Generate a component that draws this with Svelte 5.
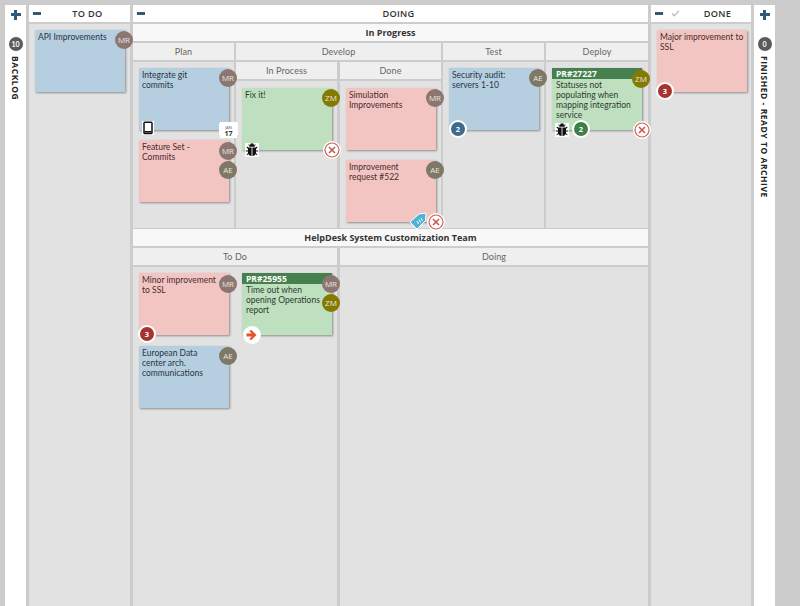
<script>
  const bug = 'M5 2.2a2 2 0 0 1 4 0l1.2-1 .5.6-1.2 1.2.4.7H4.1l.4-.7L3.3 1.8l.5-.6zM3.4 4.5h3.2V13c-1.6 0-2.8-.8-3.2-2l-1.5 1.3-.5-.6L3 10V8.4H.8v-.9H3V6L1.4 4.2l.5-.6zM7.4 4.5h3.2l1.5-.9.5.6L11 6v1.5h2.2v.9H11V10l1.6 1.7-.5.6-1.5-1.3c-.4 1.2-1.6 2-3.2 2z';
</script>

{#snippet av(label, cls, top)}
  <span class="av {cls}" style="top:{top}px">{label}</span>
{/snippet}

{#snippet cross(cls)}
  <span class="x {cls}">
    <svg viewBox="0 0 18 18" width="18" height="18"><circle cx="9" cy="9" r="9" fill="#fff"/><circle cx="9" cy="9" r="7" fill="none" stroke="#d0625a" stroke-width="1.2"/><path d="M6 6l6 6M12 6l-6 6" stroke="#c8574f" stroke-width="1.6" fill="none"/></svg>
  </span>
{/snippet}

{#snippet bugIcon(cls)}
  <span class="bug {cls}"><svg viewBox="0 0 14 14" width="14" height="14"><path d={bug} fill="#111"/></svg></span>
{/snippet}

<div class="board">
  <aside class="rail">
    <div class="rail-head"><span class="plus"></span></div>
    <span class="count">10</span>
    <span class="vtext">BACKLOG</span>
  </aside>

  <section class="col side">
    <header class="head"><span class="minus"></span><span class="title">TO DO</span></header>
    <div class="body pad-top">
      <article class="card blue"><p>API Improvements</p>{@render av('MR', 'mr', 1)}</article>
    </div>
  </section>

  <section class="col doing">
    <header class="head"><span class="minus"></span><span class="title">DOING</span></header>

    <div class="lane">In Progress</div>
    <div class="row r1">
      <div class="col plan">
        <div class="sub">Plan</div>
        <div class="body">
          <article class="card blue"><p>Integrate git commits</p>{@render av('MR', 'mr', 1)}
            <span class="tablet"><svg viewBox="0 0 12 14" width="12" height="14"><rect width="12" height="14" fill="#fff"/><rect x="2" y="1.2" width="8" height="11.4" rx=".8" fill="#fff" stroke="#111" stroke-width="1.5"/><path d="M2.5 10.8h7" stroke="#111" stroke-width="1.6"/></svg></span>
            <span class="cal"><span class="mon">JAN</span><span class="day">17</span></span>
          </article>
          <article class="card red"><p>Feature Set - Commits</p>{@render av('MR', 'mr', 2)}{@render av('AE', 'ae', 21)}</article>
        </div>
      </div>
      <div class="col develop">
        <div class="sub">Develop</div>
        <div class="split">
          <div class="col">
            <div class="sub">In Process</div>
            <div class="body deep">
              <article class="card green"><p>Fix it!</p>{@render av('ZM', 'zm', 1)}{@render bugIcon('b-left')}{@render cross('x-corner')}</article>
            </div>
          </div>
          <div class="col">
            <div class="sub">Done</div>
            <div class="body deep">
              <article class="card red"><p>Simulation Improvements</p>{@render av('MR', 'mr', 1)}</article>
              <article class="card red"><p>Improvement request #522</p>{@render av('AE', 'ae', 1)}
                <span class="tag"><svg viewBox="0 0 18 18" width="18" height="18"><path d="M1 10L10 2l7-1-.5 7.5L8 17z" fill="#4fb3d6" stroke="#fff"/><path d="M8 9l1.5 3M10 7.5l1.5 3M12 6l1.5 3" stroke="#fff" stroke-width="1"/></svg></span>
                {@render cross('x-corner')}
              </article>
            </div>
          </div>
        </div>
      </div>
      <div class="col test">
        <div class="sub">Test</div>
        <div class="body">
          <article class="card blue"><p>Security audit: servers 1-10</p>{@render av('AE', 'ae', 1)}<span class="num n-blue">2</span></article>
        </div>
      </div>
      <div class="col deploy">
        <div class="sub">Deploy</div>
        <div class="body">
          <article class="card green"><div class="pr">PR#27227</div><p class="after-pr">Statuses not populating when mapping integration service</p>{@render av('ZM', 'zm', 2)}{@render bugIcon('b-left')}<span class="num n-green">2</span>{@render cross('x-corner')}</article>
        </div>
      </div>
    </div>

    <div class="lane">HelpDesk System Customization Team</div>
    <div class="row r2">
      <div class="col l-todo">
        <div class="sub">To Do</div>
        <div class="body two">
          <div class="stack">
            <article class="card red"><p class="narrow">Minor improvement to SSL</p>{@render av('MR', 'mr', 2)}<span class="num n-red">3</span></article>
            <article class="card blue"><p class="narrow">European Data center arch. communications</p>{@render av('AE', 'ae', 1)}</article>
          </div>
          <div class="stack">
            <article class="card green"><div class="pr">PR#25955</div><p class="after-pr">Time out when opening Operations report</p>{@render av('MR', 'mr', 2)}{@render av('ZM', 'zm', 21)}
              <span class="arrow"><svg viewBox="0 0 18 18" width="18" height="18"><circle cx="9" cy="9" r="9" fill="#fff"/><path d="M3.5 7.6h5.2L6.4 5.2 8 3.7 13.5 9 8 14.3 6.4 12.8l2.3-2.4H3.5z" fill="#e0532b"/></svg></span>
            </article>
          </div>
        </div>
      </div>
      <div class="col l-doing">
        <div class="sub">Doing</div>
        <div class="body"></div>
      </div>
    </div>
  </section>

  <section class="col side done">
    <header class="head"><span class="minus"></span><span class="check"><svg viewBox="0 0 10 8" width="9" height="7"><path d="M1 4l2.6 2.6L9 1" fill="none" stroke="#bbb" stroke-width="1.5"/></svg></span><span class="title">DONE</span></header>
    <div class="body pad-top">
      <article class="card red"><p class="wide">Major improvement to SSL</p><span class="num n-red">3</span></article>
    </div>
  </section>

  <aside class="rail">
    <div class="rail-head"><span class="plus"></span></div>
    <span class="count">0</span>
    <span class="vtext">FINISHED - READY TO ARCHIVE</span>
  </aside>
</div>

<style>
  :global(body) { margin: 0; background: #cccccc; }
  .board {
    width: 800px; height: 606px; overflow: hidden; box-sizing: border-box;
    padding: 5px 25px 0 5px; display: flex; gap: 3px;
    background: #cccccc; color: #333; font-family: "Lato", "Liberation Sans", sans-serif; font-size: 8.5px;
  }
  p { margin: 0; }

  .rail { width: 21px; background: #fff; display: flex; flex-direction: column; align-items: center; flex: none; }
  .rail-head { height: 19px; display: flex; align-items: center; justify-content: center; width: 100%; }
  .plus { width: 10px; height: 10px; background:
      linear-gradient(#2e5a78,#2e5a78) center/10px 3px no-repeat,
      linear-gradient(#2e5a78,#2e5a78) center/3px 10px no-repeat; }
  .count { margin-top: 13px; width: 14px; height: 14px; border-radius: 50%; background: #5a5a5a; color: #fff;
    font-size: 7px; font-weight: 700; display: flex; align-items: center; justify-content: center; }
  .vtext { writing-mode: vertical-rl; margin-top: 5px; font-size: 8.5px; font-weight: 700; color: #222; letter-spacing: .55px; white-space: nowrap; font-family: "Open Sans", sans-serif; }

  .col { display: flex; flex-direction: column; min-width: 0; }
  .side { width: 101px; flex: none; }
  .doing { width: 515px; flex: none; gap: 2px; }
  .done { width: 100px; }

  .head { height: 17px; background: #fff; display: flex; align-items: center; flex: none;
    font-family: "Open Sans", sans-serif; font-weight: 600; font-size: 9.2px; color: #333; letter-spacing: .3px; }
  .minus { width: 8px; height: 3px; background: #35596f; margin-left: 4px; flex: none; }
  .title { flex: 1; text-align: center; padding-left: 4px; }
  .check { margin-left: 8px; display: flex; }

  .body { background: #e2e2e2; flex: 1; box-sizing: border-box; padding: 6px; display: flex; flex-direction: column; gap: 10px; min-height: 0; }
  .side .body { margin-top: 2px; padding: 6px; }
  .deep { padding-top: 7px; }

  .lane { height: 17px; flex: none; background: #f8f8f8; display: flex; align-items: center; justify-content: center;
    font-family: "Open Sans", sans-serif; font-weight: 700; font-size: 9px; color: #333; }

  .row { display: grid; gap: 2px; }
  .r1 { grid-template-columns: 101px 205px 101px 102px; height: 184px; flex: none; }
  .r2 { grid-template-columns: 204px 1fr; column-gap: 3px; flex: 1; min-height: 0; }

  .sub { height: 17px; flex: none; background: #efefef; display: flex; align-items: center; justify-content: center;
    font-size: 9px; color: #666; margin-bottom: 2px; letter-spacing: .1px; }
  .split { display: grid; grid-template-columns: 101px 101px; gap: 3px; flex: 1; min-height: 0; }

  .card { position: relative; width: 90px; height: 62px; flex: none; box-sizing: border-box; padding: 2px 3px 3px; line-height: 10px; box-shadow: 1px 1px 2px rgba(0,0,0,.38); }
  .blue { background: #b6cfe0; color: #2a3440; }
  .red { background: #f2c5c2; color: #4a2c2c; }
  .green { background: #bfe0bf; color: #2f3a2f; }
  .card p { width: 78px; }
  .card p.wide { width: 86px; }
  .after-pr { margin: 1px 0 0 1px; }
  .pr { margin: -2px -3px 0; height: 11px; background: #47804f; color: #fff; font-family: "Open Sans", sans-serif; font-weight: 700; font-size: 8.5px; line-height: 11px; padding-left: 4px; }

  .av { position: absolute; right: -8px; width: 18px; height: 18px; border-radius: 50%; color: #e8e4e0; font-size: 8px;
    display: flex; align-items: center; justify-content: center; z-index: 2; font-family: "Open Sans", sans-serif; }
  .mr { background: #8c7770; }
  .ae { background: #7e7864; }
  .zm { background: #857a00; }

  .tablet { position: absolute; left: 3px; bottom: -5px; display: flex; z-index: 2; }
  .cal { position: absolute; right: -8px; bottom: -8px; width: 17px; height: 16px; background: #fff; display: flex; flex-direction: column; align-items: center; z-index: 3; box-shadow: 3px -1px 0 -2px #fff, -3px -1px 0 -2px #fff; }
  .mon { font-size: 4px; line-height: 5px; margin-top: 3px; color: #555; font-family: "Open Sans", sans-serif; }
  .day { font-size: 7px; line-height: 7px; font-weight: 700; color: #333; font-family: "Open Sans", sans-serif; }

  .bug { position: absolute; left: 3px; bottom: -7px; display: flex; background: #fff; width: 14px; height: 14px; z-index: 2; }
  .x { position: absolute; right: -9px; bottom: -9px; display: flex; z-index: 2; }
  .tag { position: absolute; right: 9px; bottom: -8px; display: flex; z-index: 2; }
  .num { position: absolute; width: 14px; height: 14px; border: 2px solid #fff; border-radius: 50%; color: #fff; font-size: 7.5px; font-weight: 700;
    display: flex; align-items: center; justify-content: center; bottom: -8px; left: 0; z-index: 2; font-family: "Open Sans", sans-serif; }
  .n-blue { background: #3f6a8c; left: 0; }
  .n-green { background: #3f8048; left: 20px; }
  .n-red { background: #a53330; left: -1px; }
  .arrow { position: absolute; left: 1px; bottom: -9px; display: flex; z-index: 2; }

  .two { flex-direction: row; gap: 13px; }
  .stack { display: flex; flex-direction: column; gap: 11px; }
</style>
